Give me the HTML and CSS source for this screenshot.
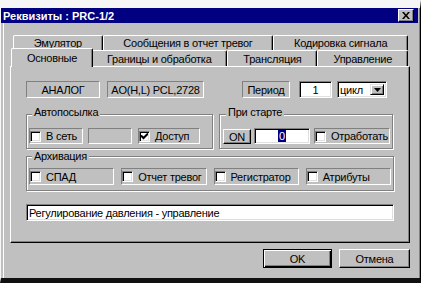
FILE: index.html
```html
<!DOCTYPE html>
<html lang="ru">
<head>
  <meta charset="UTF-8" />
  <title>Реквизиты : PRC-1/2</title>
  <link rel="stylesheet" href="styles.css">
</head>
<body>

  <div class="window">
    <div class="titlebar">
      <span class="title">Реквизиты : PRC-1/2</span>
      <span class="close">
        <svg width="8" height="7" viewBox="0 0 8 7"><path d="M0 0H2L4 2.4L6 0H8L5.1 3.5L8 7H6L4 4.6L2 7H0L2.9 3.5Z" fill="#000"/></svg>
      </span>
    </div>

    <div class="content">
      <div class="tab-row back">
        <div class="tab">Эмулятор</div>
        <div class="tab">Сообщения в отчет тревог</div>
        <div class="tab">Кодировка сигнала</div>
      </div>
      <div class="tab-row front">
        <div class="tab active">Основные</div>
        <div class="tab">Границы и обработка</div>
        <div class="tab">Трансляция</div>
        <div class="tab">Управление</div>
      </div>

      <div class="panel">
        <div class="row-top">
          <div class="static analog">АНАЛОГ</div>
          <div class="static addr">AO(H,L) PCL,2728</div>
          <div class="static period">Период</div>
          <div class="edit num">1</div>
          <div class="combo">
            <span class="combo-text">цикл</span>
            <span class="drop"><svg width="7" height="4" viewBox="0 0 7 4"><path d="M0 0H7L3.5 4Z" fill="#000"/></svg></span>
          </div>
        </div>

        <div class="groups">
          <fieldset class="group auto">
            <legend>Автопосылка</legend>
            <label class="check net"><span class="box"></span>В сеть</label>
            <div class="static blank"></div>
            <label class="check access"><span class="box checked"><svg width="7" height="7" viewBox="0 0 7 7"><path d="M0 2.5L2.5 5L7 0.5" stroke="#000" stroke-width="2" fill="none"/></svg></span>Доступ</label>
          </fieldset>
          <fieldset class="group start">
            <legend>При старте</legend>
            <div class="button on">ON</div>
            <div class="edit startval"><span class="sel">0</span></div>
            <label class="check work"><span class="box"></span>Отработать</label>
          </fieldset>
        </div>

        <fieldset class="group archive">
          <legend>Архивация</legend>
          <label class="check"><span class="box"></span>СПАД</label>
          <label class="check"><span class="box"></span>Отчет тревог</label>
          <label class="check"><span class="box"></span>Регистратор</label>
          <label class="check"><span class="box"></span>Атрибуты</label>
        </fieldset>

        <div class="edit descr">Регулирование давления - управление</div>
      </div>

      <div class="buttons">
        <div class="button default">OK</div>
        <div class="button cancel">Отмена</div>
      </div>
    </div>
  </div>

</body>
</html>
```

FILE: styles.css
```css
html, body { margin: 0; padding: 0; background: #f6f6f6; }
body { font-family: "Liberation Sans", Arial, sans-serif; font-size: 11px; letter-spacing: -0.25px; color: #000; }

.window {
  width: 421px; height: 283px; box-sizing: border-box;
  background: #c0c0c0;
  border-top: 8px solid #f6f6f6; border-left: 1px solid #f6f6f6;
  border-right: 1px solid #000; border-bottom: 5px solid #101010;
  box-shadow: inset -1px 0 0 #808080;
  display: flex; flex-direction: column;
}

/* title */
.titlebar {
  height: 15px; margin-right: 2px; padding-left: 2px;
  background: #000080; color: #fff;
  display: flex; align-items: center; justify-content: space-between;
}
.title { font-weight: bold; font-size: 11px; letter-spacing: 0; }
.close {
  width: 16px; height: 13px; margin-right: 4px; box-sizing: border-box;
  background: #c0c0c0;
  border-top: 1px solid #fff; border-left: 1px solid #fff;
  border-right: 1px solid #000; border-bottom: 1px solid #000;
  box-shadow: inset -1px -1px 0 #808080;
  display: flex; align-items: center; justify-content: center;
}

.content {
  flex: 1; padding: 12px 10px 0 9px;
  box-shadow: inset 2px 0 0 #c0c0c0, inset 3px 0 0 #fff;
}

/* tabs */
.tab-row { display: flex; margin: 0 2px 0 3px; }
.tab-row.back { height: 15px; }
.tab-row.front { height: 16px; }
.tab {
  flex: 1 1 auto; padding: 0 6px;
  display: flex; align-items: center; justify-content: center;
  white-space: nowrap;
  border-top: 1px solid #fff; border-left: 1px solid #fff; border-right: 1px solid #000;
  box-shadow: inset -1px 0 0 #808080;
  border-radius: 2px 2px 0 0;
}
.tab.active {
  position: relative; z-index: 1;
  background: #c0c0c0;
  margin: -2px -2px -1px -2px; padding-bottom: 1px;
}

/* panel */
.panel {
  height: 177px; box-sizing: border-box;
  padding: 14px 15px 0 15px;
  border-top: 1px solid #fff; border-left: 1px solid #fff;
  border-right: 1px solid #000; border-bottom: 1px solid #000;
  box-shadow: inset -1px -1px 0 #808080;
}

.row-top { display: flex; height: 17px; }

.static {
  box-sizing: border-box; white-space: nowrap;
  border: 1px solid; border-color: #808080 #fff #fff #808080;
  display: flex; align-items: center; justify-content: center;
}
.analog { width: 74px; }
.addr { width: 97px; margin-left: 7px; }
.period { width: 48px; margin-left: 38px; }

.edit {
  box-sizing: border-box; background: #fff; white-space: nowrap;
  border: 1px solid; border-color: #808080 #fff #fff #808080;
  box-shadow: inset 1px 1px 0 #000, inset -1px -1px 0 #dfdfdf;
  display: flex; align-items: center;
}
.num { width: 33px; margin-left: 9px; justify-content: center; }

.combo {
  width: 50px; margin-left: 5px; box-sizing: border-box; background: #fff;
  border: 1px solid; border-color: #808080 #fff #fff #808080;
  box-shadow: inset 1px 1px 0 #000, inset -1px -1px 0 #dfdfdf;
  display: flex; align-items: stretch; padding: 2px;
}
.combo-text { flex: 1; display: flex; align-items: center; }
.drop {
  width: 14px; box-sizing: border-box; background: #c0c0c0;
  border-top: 1px solid #dfdfdf; border-left: 1px solid #dfdfdf;
  border-right: 1px solid #000; border-bottom: 1px solid #000;
  box-shadow: inset 1px 1px 0 #fff, inset -1px -1px 0 #808080;
  display: flex; align-items: center; justify-content: center;
}

/* groups */
.group {
  margin: 0; min-width: 0; box-sizing: border-box;
  border: 1px solid #808080;
  box-shadow: 1px 1px 0 #fff, inset 1px 1px 0 #fff;
}
.group legend {
  padding: 0 2px; margin-left: 3px;
  line-height: 12px; background: #c0c0c0;
}

.groups { display: flex; gap: 6px; margin-top: 8px; }
.auto, .start { display: flex; height: 43px; padding: 6px 2px 0 2px; }
.auto { width: 187px; }
.start { width: 174px; padding-left: 3px; }
.auto > *, .start > * { height: 16px; }

.check {
  box-sizing: border-box; white-space: nowrap;
  border: 1px solid; border-color: #808080 #fff #fff #808080;
  display: flex; align-items: center; gap: 5px;
}
.box {
  width: 11px; height: 11px; flex: none; box-sizing: border-box; background: #fff;
  border: 1px solid; border-color: #808080 #fff #fff #808080;
  box-shadow: inset 1px 1px 0 #000, inset -1px -1px 0 #dfdfdf;
  display: flex; align-items: center; justify-content: center;
}
.net { width: 54px; }
.blank { width: 44px; margin-left: 5px; }
.access { width: 62px; margin-left: 6px; }

.button {
  box-sizing: border-box; background: #c0c0c0;
  border-top: 1px solid #fff; border-left: 1px solid #fff;
  border-right: 1px solid #000; border-bottom: 1px solid #000;
  box-shadow: inset -1px -1px 0 #808080;
  display: flex; align-items: center; justify-content: center;
}
.on { width: 28px; height: 15px; margin-top: 1px; }
.startval { width: 56px; margin-left: 3px; justify-content: center; }
.sel { background: #000080; color: #fff; padding: 0 1px; }
.work { width: 76px; margin-left: 4px; }

.archive {
  display: grid; grid-template-columns: repeat(4, 1fr); gap: 7px;
  height: 41px; margin-top: 1px; padding: 6px 2px 0 2px;
}
.archive .check { height: 17px; }

.descr { height: 17px; margin-top: 13px; padding-left: 2px; }

/* dialog buttons */
.buttons { display: flex; justify-content: flex-end; gap: 7px; margin-top: 6px; }
.buttons .button { height: 19px; }
.default { width: 69px; border: 1px solid #000; box-shadow: inset 1px 1px 0 #fff, inset -1px -1px 0 #000, inset -2px -2px 0 #808080; }
.cancel { width: 71px; }
```
